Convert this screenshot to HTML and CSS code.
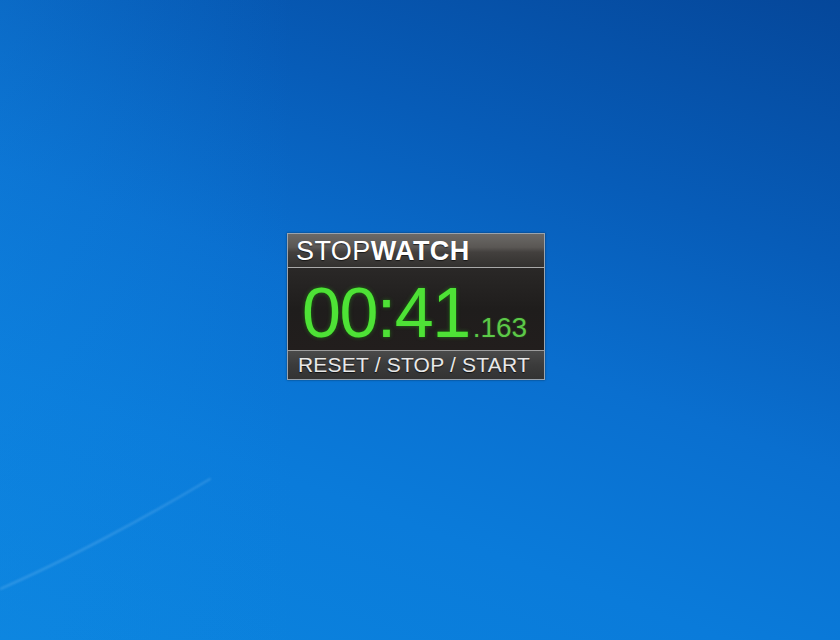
FILE: index.html
```html
<!DOCTYPE html>
<html lang="en">
<head>
<meta charset="utf-8">
<title>Stopwatch gadget</title>
<link rel="stylesheet" href="styles.css">
</head>
<body>
<div class="desktop">
  <svg class="streak" width="240" height="140" viewBox="0 0 240 140" aria-hidden="true">
    <path d="M0 112 C 60 86, 140 44, 210 2" fill="none" stroke="#6fb6f0" stroke-width="2" stroke-linecap="round" opacity="0.4"/>
  </svg>
  <div class="gadget">
    <div class="gadget-header">
      <span class="title-light">STOP</span><span class="title-bold">WATCH</span>
    </div>
    <div class="gadget-body">
      <span class="time-main">00:41</span><span class="time-ms">.163</span>
    </div>
    <div class="gadget-footer">RESET / STOP / START</div>
  </div>
</div>
</body>
</html>
```
FILE: styles.css
```css
html, body {
  margin: 0;
  padding: 0;
}
body {
  width: 840px;
  height: 640px;
  overflow: hidden;
  font-family: "Liberation Sans", Arial, sans-serif;
}
.desktop {
  position: relative;
  width: 840px;
  height: 640px;
  background:
    linear-gradient(to right, rgba(20,140,230,0.25) 0%, rgba(20,140,230,0) 35%),
    linear-gradient(200deg, #05479a 0%, #075cb8 28%, #0a6fcf 50%, #0a7bda 72%, #0b84de 100%);
}
.streak {
  position: absolute;
  left: 0;
  top: 477px;
  filter: blur(1px);
}
.gadget {
  position: absolute;
  left: 287px;
  top: 233px;
  width: 256px;
  height: 145px;
  border: 1px solid #9aa3ad;
  display: flex;
  flex-direction: column;
  box-shadow: 0 0 2px rgba(0,0,0,0.5);
}
.gadget-header {
  height: 33px;
  line-height: 34px;
  font-size: 27px;
  letter-spacing: 0.4px;
  color: #ffffff;
  padding-left: 8px;
  background: linear-gradient(to bottom, #6b6967 0%, #5a5754 40%, #43403e 55%, #33312f 100%);
  border-bottom: 1px solid #a9a9a9;
  white-space: nowrap;
  text-shadow: 0 1px 1px rgba(0,0,0,0.6);
}
.title-light {
  font-weight: normal;
}
.title-bold {
  font-weight: bold;
}
.gadget-body {
  height: 83px;
  box-sizing: border-box;
  padding: 10px 0 0 14px;
  display: flex;
  align-items: baseline;
  background: linear-gradient(to bottom, #2a2827 0%, #1f1d1c 50%, #221e1d 100%);
  border-bottom: 1px solid #9d9d9d;
}
.time-main {
  font-size: 70px;
  line-height: 70px;
  letter-spacing: -1.5px;
  color: #4ee236;
  text-shadow: 0 0 1px #145a0a, 0 0 1px #145a0a, 0 0 4px rgba(60,200,40,0.4);
}
.time-ms {
  font-size: 28px;
  line-height: 28px;
  margin-left: 3px;
  color: #5cc848;
  text-shadow: 0 0 2px rgba(60,180,40,0.4);
}
.gadget-footer {
  flex: 1;
  line-height: 28px;
  font-size: 21px;
  letter-spacing: 0.2px;
  color: #e8e8e8;
  padding-left: 10px;
  background: linear-gradient(to bottom, #4a4a4a 0%, #3b3b3b 50%, #333333 100%);
  white-space: nowrap;
  text-shadow: 0 1px 1px rgba(0,0,0,0.7);
}
```
